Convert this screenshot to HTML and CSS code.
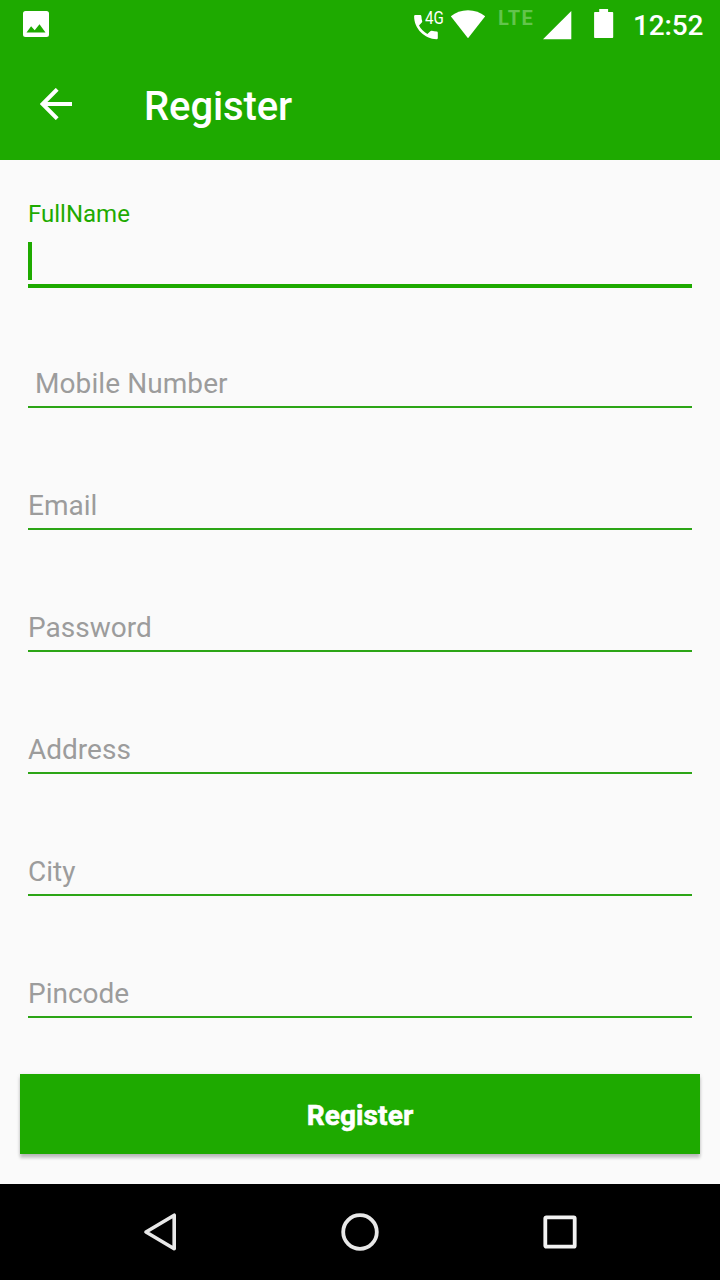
FILE: index.html
```html
<!DOCTYPE html>
<html lang="en">
<head>
<meta charset="utf-8">
<title>Register</title>
<link rel="stylesheet" href="styles.css">
</head>
<body>
<div class="screen">
  <div class="status-bar">
    <svg class="photo" width="26" height="26" viewBox="0 0 26 26"><path fill="#fff" fill-rule="evenodd" d="M2.5 0H23.5a2.5 2.5 0 0 1 2.5 2.5V23.5a2.5 2.5 0 0 1-2.5 2.5H2.5a2.5 2.5 0 0 1-2.5-2.5V2.5a2.5 2.5 0 0 1 2.5-2.5ZM3.5 21.5H22.5L16.5 13.3 11.7 19.2 8.1 15.3Z"/></svg>
    <div class="call">
      <svg width="24" height="25" viewBox="0 0 24 25"><path fill="#fff" d="M1.3 0H6.2Q7.3 0 7.4 1.2Q7.5 4 8.2 6.2Q8.4 7 7.8 7.6L5 10.6Q8 16.2 13.4 19L16.3 16.2Q17 15.6 17.8 15.8Q20.2 16.5 22.7 16.6Q23.8 16.7 23.8 17.8V23Q23.8 24.2 22.6 24.2C10.5 24.2.1 13.5.1 1.3Q.1 0 1.3 0Z"/></svg>
      <span class="network">4G</span>
    </div>
    <svg class="wifi" width="36" height="30" viewBox="0 0 36 30"><path fill="#fff" d="M.8 6.3Q8 .2 18 .2T35.2 6.3L18 28.3Z"/></svg>
    <span class="lte">LTE</span>
    <svg class="signal" width="29" height="29" viewBox="0 0 29 29"><path fill="#fff" d="M0 28.2L28.3 0V28.2Z"/></svg>
    <svg class="battery" width="20" height="30" viewBox="0 0 20 30"><path fill="#fff" d="M5.2 0H14.1V3H18.4Q19.2 3 19.2 3.8V28.2Q19.2 29 18.4 29H.9Q.1 29 .1 28.2V3.8Q.1 3 .9 3H5.2Z"/></svg>
    <span class="clock">12:52</span>
  </div>
  <header class="app-bar">
    <svg class="back" width="32" height="32" viewBox="0 0 32 32"><path d="M32 16H3M17.2 1.3L2.5 16L17.2 30.7" fill="none" stroke="#fff" stroke-width="4"/></svg>
    <h1 class="title">Register</h1>
  </header>
  <main class="form">
    <div class="field focused">
      <label class="label">FullName</label>
      <span class="caret"></span>
    </div>
    <div class="field"><span class="hint spaced"> Mobile Number</span></div>
    <div class="field"><span class="hint">Email</span></div>
    <div class="field"><span class="hint">Password</span></div>
    <div class="field"><span class="hint">Address</span></div>
    <div class="field"><span class="hint">City</span></div>
    <div class="field"><span class="hint">Pincode</span></div>
    <button class="submit">Register</button>
  </main>
  <nav class="nav-bar">
    <svg width="40" height="40" viewBox="0 0 40 40"><path d="M34.2 3.2V36.8L6 20Z" fill="none" stroke="#e8e8e8" stroke-width="3.6" stroke-linejoin="round"/></svg>
    <svg width="40" height="40" viewBox="0 0 40 40"><circle cx="20" cy="20" r="16.8" fill="none" stroke="#e8e8e8" stroke-width="3.8"/></svg>
    <svg width="40" height="40" viewBox="0 0 40 40"><rect x="5.3" y="5.3" width="29.4" height="29.4" rx="1" fill="none" stroke="#f2f2f2" stroke-width="3.8"/></svg>
  </nav>
</div>
</body>
</html>
```
FILE: styles.css
```css
* { box-sizing: border-box; }
body {
  margin: 0;
  font-family: Roboto, "Liberation Sans", sans-serif;
  background: #fafafa;
}
svg { display: block; flex: none; }
.screen {
  width: 720px;
  height: 1280px;
  display: flex;
  flex-direction: column;
  overflow: hidden;
}
.status-bar {
  height: 48px;
  display: flex;
  align-items: flex-start;
  background: #1eaa00;
  color: #fff;
  padding-left: 23px;
}
.photo { margin-top: 11px; }
.call {
  position: relative;
  width: 30px;
  margin: 15px 6px 0 365px;
}
.network {
  position: absolute;
  left: 10.5px;
  top: -6px;
  font-size: 18px;
  line-height: 18px;
  transform: scaleX(.84);
  transform-origin: left;
}
.wifi { margin-top: 10px; }
.lte {
  width: 45px;
  margin: 8px 0 0 12px;
  font-size: 20px;
  line-height: 20px;
  font-weight: 700;
  letter-spacing: 1.2px;
  color: #62c44c;
}
.signal { margin-top: 11px; }
.battery { margin: 9px 0 0 22px; }
.clock {
  margin: 9px 0 0 19px;
  font-size: 28px;
  line-height: 33px;
  font-weight: 500;
  letter-spacing: -.15px;
}
.app-bar {
  height: 112px;
  display: flex;
  align-items: center;
  background: #1eaa00;
  color: #fff;
  padding-left: 40px;
}
.title {
  margin: 6px 0 0 72px;
  font-size: 40px;
  line-height: 48px;
  font-weight: 500;
  letter-spacing: -.1px;
}
.form {
  height: 1024px;
  padding: 38px 20px 0;
}
.field {
  height: 122px;
  margin: 0 8px;
  padding-bottom: 6px;
  display: flex;
  flex-direction: column;
  justify-content: flex-end;
  border-bottom: 2px solid #2ca516;
}
.field.focused {
  height: 90px;
  padding-bottom: 4px;
  border-bottom: 4px solid #1eaa00;
}
.label {
  margin-bottom: 14px;
  font-size: 24px;
  line-height: 28px;
  color: #1eaa00;
}
.caret {
  width: 4px;
  height: 38px;
  background: #1eaa00;
}
.field.focused + .field { height: 120px; }
.hint {
  font-size: 28px;
  line-height: 33px;
  color: #9c9c9c;
  white-space: pre;
}
.hint.spaced { letter-spacing: .08px; }
.submit {
  display: block;
  width: 680px;
  height: 80px;
  margin-top: 56px;
  padding: 2px 0 0;
  border: 0;
  background: #1eaa00;
  color: #fff;
  font: 700 28px/33px Roboto, "Liberation Sans", sans-serif;
  letter-spacing: .1px;
  -webkit-text-stroke: .6px #fff;
  box-shadow: 0 4px 3px rgba(0, 0, 0, .2), 0 1px 4px rgba(0, 0, 0, .12);
}
.nav-bar {
  height: 96px;
  display: flex;
  align-items: center;
  justify-content: center;
  gap: 160px;
  background: #000;
}
```
